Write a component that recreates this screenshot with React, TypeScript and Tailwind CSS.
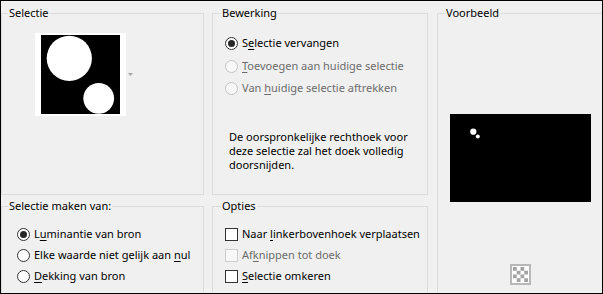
import React from 'react';

type OptProps = { label: React.ReactNode; checked?: boolean; disabled?: boolean };

const Radio: React.FC<OptProps> = ({ label, checked, disabled }) => (
  <div className="flex h-[21px] items-center">
    <span
      className={`flex h-[13px] w-[13px] shrink-0 items-center justify-center rounded-full border ${
        disabled ? 'border-[#c4c4c4] bg-[#f7f7f7]' : 'border-[#333333] bg-white'
      }`}
    >
      {checked && <span className="h-[7px] w-[7px] rounded-full bg-[#262626]" />}
    </span>
    <span className={`ml-[4px] whitespace-nowrap ${disabled ? 'text-[#6d6d6d]' : 'text-black'}`}>{label}</span>
  </div>
);

const Check: React.FC<OptProps> = ({ label, disabled }) => (
  <div className="flex h-[21px] items-center">
    <span
      className={`h-[13px] w-[13px] shrink-0 border ${
        disabled ? 'border-[#cccccc] bg-[#f7f7f7]' : 'border-[#333333] bg-white'
      }`}
    />
    <span className={`ml-[4px] whitespace-nowrap ${disabled ? 'text-[#6d6d6d]' : 'text-black'}`}>{label}</span>
  </div>
);

const U: React.FC<{ children: React.ReactNode }> = ({ children }) => <span className="underline underline-offset-2">{children}</span>;

const Group: React.FC<{ title: string; legendClass: string; className: string; children?: React.ReactNode }> = ({
  title,
  legendClass,
  className,
  children,
}) => (
  <fieldset className={`border border-[#dcdcdc] ${className}`}>
    <legend className={`px-[1px] leading-[16px] text-black ${legendClass}`}>{title}</legend>
    {children}
  </fieldset>
);

export default function App() {
  return (
    <div
      className="h-[294px] w-[603px] overflow-hidden border border-black bg-[#f0f0f0] pt-[4px] text-[11px]"
      style={{ fontFamily: '"Noto Sans", "Open Sans", sans-serif' }}
    >
      <div className="flex">
        {/* left column */}
        <div className="flex w-[203px] shrink-0 flex-col">
          <Group title="Selectie" legendClass="ml-[6px]" className="h-[190px]">
            <div className="ml-[33px] mt-[12px] flex items-center">
              <div className="bg-white px-[6px] py-[2px]">
                <svg width="79" height="79" viewBox="0 0 79 79" className="block">
                  <defs>
                    <filter id="soft" x="-10%" y="-10%" width="120%" height="120%">
                      <feGaussianBlur stdDeviation="0.6" />
                    </filter>
                  </defs>
                  <rect width="79" height="79" fill="#000" />
                  <g filter="url(#soft)">
                    <circle cx="28.3" cy="23.3" r="22.6" fill="#fff" />
                    <circle cx="57.7" cy="63.3" r="15.4" fill="#fff" />
                  </g>
                </svg>
              </div>
              <svg width="5" height="3" viewBox="0 0 5 3" className="ml-[2px] block">
                <path d="M0 0H5L2.5 3Z" fill="#a6a6a6" />
              </svg>
            </div>
          </Group>
          <Group title="Selectie maken van:" legendClass="ml-[6px]" className="mt-[3px] h-[120px]">
            <div className="ml-[15px] mt-[10px] flex flex-col">
              <Radio checked label={<>L<U>u</U>minantie van bron</>} />
              <Radio label={<>Elke waarde niet gelijk aan <U>n</U>ul</>} />
              <Radio label={<><U>D</U>ekking van bron</>} />
            </div>
          </Group>
        </div>

        {/* middle column */}
        <div className="ml-[8px] flex w-[216px] shrink-0 flex-col">
          <Group title="Bewerking" legendClass="ml-[8px]" className="h-[190px]">
            <div className="ml-[12px] mt-[12px] flex flex-col">
              <div className="h-[22.6px]">
                <Radio checked label={<>S<U>e</U>lectie vervangen</>} />
              </div>
              <div className="h-[22.6px]">
                <Radio disabled label={<><U>T</U>oevoegen aan huidige selectie</>} />
              </div>
              <div className="h-[22.6px]">
                <Radio disabled label={<>Van <U>h</U>uidige selectie aftrekken</>} />
              </div>
            </div>
            <p className="ml-[16px] mt-[29px] whitespace-nowrap leading-[14px] text-black">
              De oorspronkelijke rechthoek voor
              <br />
              deze selectie zal het doek volledig
              <br />
              doorsnijden.
            </p>
          </Group>
          <Group title="Opties" legendClass="ml-[8px]" className="mt-[3px] h-[120px]">
            <div className="ml-[12px] mt-[10px] flex flex-col">
              <Check label={<>Naar <U>l</U>inkerbovenhoek verplaatsen</>} />
              <Check disabled label={<>Af<U>k</U>nippen tot doek</>} />
              <Check label={<><U>S</U>electie omkeren</>} />
            </div>
          </Group>
        </div>

        {/* right column */}
        <div className="ml-[9px] w-[180px] shrink-0">
          <Group title="Voorbeeld" legendClass="ml-[7px]" className="h-[320px]">
            <div className="ml-[12px] mt-[93px] h-[88px] w-[141px] bg-black">
              <svg width="141" height="88" viewBox="0 0 141 88" className="block">
                <circle cx="23.3" cy="17.7" r="3.1" fill="#fff" />
                <circle cx="27.8" cy="22.6" r="2" fill="#fff" />
              </svg>
            </div>
            <div className="ml-[72px] mt-[62px] flex h-[21px] w-[21px] items-center justify-center border-2 border-[#b8b8b8] bg-white">
              <svg width="15" height="15" viewBox="0 0 16 16" className="block">
                {[0, 1, 2, 3].map((r) =>
                  [0, 1, 2, 3].map((c) =>
                    (r + c) % 2 === 0 ? <rect key={`${r}-${c}`} x={c * 4} y={r * 4} width="4" height="4" fill="#a3a3a3" /> : null
                  )
                )}
              </svg>
            </div>
          </Group>
        </div>
      </div>
    </div>
  );
}
